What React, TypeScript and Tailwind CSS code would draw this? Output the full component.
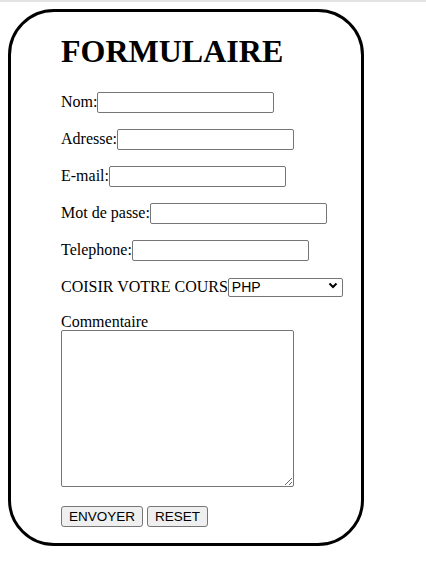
export default function App() {
  const champs = [
    { label: "Nom:", type: "text" },
    { label: "Adresse:", type: "text" },
    { label: "E-mail:", type: "email" },
    { label: "Mot de passe:", type: "password" },
    { label: "Telephone:", type: "tel" },
  ];

  return (
    <div className="min-h-[561px] bg-white font-['Liberation_Serif',serif] text-[16px] text-black">
      {/* ligne grise du haut */}
      <div className="h-[2px] bg-[#e3e3e3]" />

      <div className="pt-[7px] pl-[8px]">
        <form className="w-[356px] h-[537px] border-[3px] border-black rounded-[46px] pl-[50px]">
          <h1 className="mt-[21px] mb-[21px] text-[32px] leading-[37px] font-bold">FORMULAIRE</h1>

          {champs.map((c) => (
            <div key={c.label} className="flex items-baseline h-[21px] mb-[16px] leading-[21px]">
              <span>{c.label}</span>
              <input
                type={c.type}
                className="w-[177px] h-[21px] border border-[#767676] rounded-[2px] px-[2px] text-[13.33px] font-['Liberation_Sans',sans-serif] bg-white"
              />
            </div>
          ))}

          <div className="flex items-baseline h-[21px] mb-[16px] leading-[21px]">
            <span>COISIR VOTRE COURS</span>
            <div className="relative">
              <select className="appearance-none w-[115px] h-[19px] border border-[#767676] rounded-[2px] pl-[3px] text-[14px] leading-[17px] font-['Liberation_Sans',sans-serif] bg-white">
                <option>PHP</option>
                <option>JAVA</option>
                <option>PYTHON</option>
              </select>
              <svg
                className="absolute right-[5px] top-[6px] pointer-events-none"
                width="10"
                height="7"
                viewBox="0 0 10 7"
              >
                <path d="M1.5 1.5 L5 5 L8.5 1.5" fill="none" stroke="black" strokeWidth="2" />
              </svg>
            </div>
          </div>

          <div className="leading-[17px]">Commentaire</div>
          <textarea className="block w-[233px] h-[157px] border border-[#767676] rounded-[2px] bg-white resize" />

          <div className="flex gap-[4px] mt-[19px]">
            <button
              type="submit"
              className="h-[21px] px-[7px] border border-[#767676] rounded-[3px] bg-[#efefef] text-[13.5px] leading-[19px] font-['Liberation_Sans',sans-serif]"
            >
              ENVOYER
            </button>
            <button
              type="reset"
              className="h-[21px] px-[7px] border border-[#767676] rounded-[3px] bg-[#efefef] text-[13.5px] leading-[19px] font-['Liberation_Sans',sans-serif]"
            >
              RESET
            </button>
          </div>
        </form>
      </div>
    </div>
  );
}
